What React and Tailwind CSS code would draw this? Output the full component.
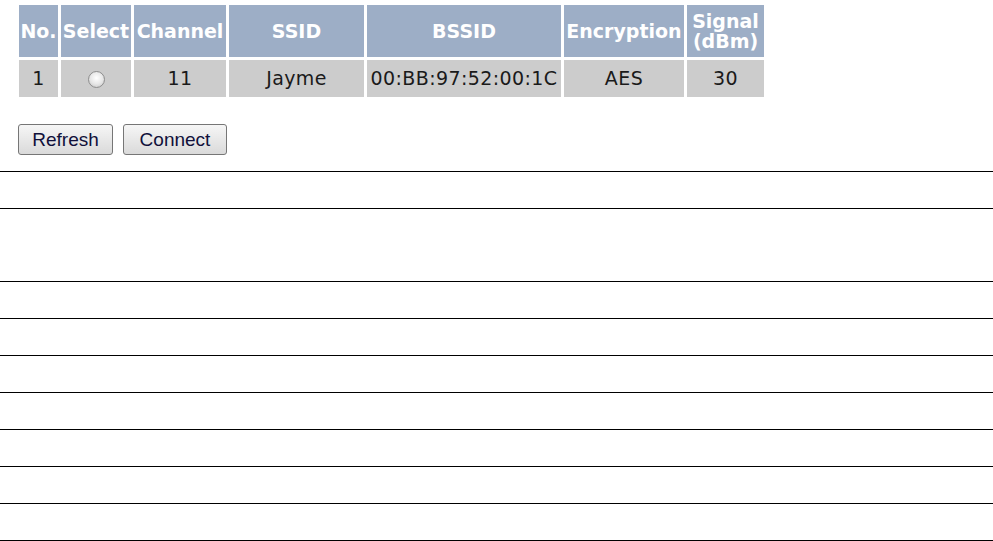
import React from 'react';

const columns = [
  { label: 'No.', width: 'w-[39px]' },
  { label: 'Select', width: 'w-[70px]' },
  { label: 'Channel', width: 'w-[92px]' },
  { label: 'SSID', width: 'w-[135px]' },
  { label: 'BSSID', width: 'w-[194px]' },
  { label: 'Encryption', width: 'w-[120px]' },
  { label: 'Signal (dBm)', width: 'w-[77px]' },
];

const networks = [
  { no: 1, channel: 11, ssid: 'Jayme', bssid: '00:BB:97:52:00:1C', enc: 'AES', signal: 30 },
];

const Radio = () => (
  <span className="inline-block h-[17px] w-[17px] rounded-full border border-[#8e8e8e] bg-[radial-gradient(circle_at_50%_40%,#ffffff_0%,#e8e8e8_50%,#c2c2c2_100%)] align-middle" />
);

const Button = ({ children, width }) => (
  <button
    type="button"
    className={`${width} h-[31px] rounded-[3px] border border-[#767676] bg-gradient-to-b from-[#f6f6f6] to-[#dadada] text-[19px] leading-none text-[#10103a] [font-family:'Liberation_Sans',Arial,sans-serif]`}
  >
    {children}
  </button>
);

const cell = 'bg-[#cccccc] p-0 text-center align-middle text-[19px] tracking-[0.4px] text-[#1a1a1a]';

export default function App() {
  const rowHeights = ['h-[37px]', 'h-[73px]', 'h-[37px]', 'h-[37px]', 'h-[37px]', 'h-[37px]', 'h-[37px]', 'h-[37px]', 'h-[37px]', 'h-px'];

  return (
    <div className="min-h-[541px] w-full bg-white [font-family:'DejaVu_Sans',Verdana,sans-serif]">
      <table className="ml-[16px] mt-[2px] table-fixed border-separate border-spacing-[3px]">
        <thead>
          <tr>
            {columns.map((c) => (
              <th
                key={c.label}
                className={`${c.width} h-[52px] bg-[#9daec6] p-0 text-center align-middle text-[19px] font-bold leading-[20px] text-white`}
              >
                {c.label === 'Signal (dBm)' ? (
                  <span>
                    Signal
                    <br />
                    (dBm)
                  </span>
                ) : (
                  <span className="whitespace-nowrap">{c.label}</span>
                )}
              </th>
            ))}
          </tr>
        </thead>
        <tbody>
          {networks.map((n) => (
            <tr key={n.no}>
              <td className={`h-[37px] ${cell}`}>{n.no}</td>
              <td className="bg-[#cccccc] p-0 text-center align-middle">
                <Radio />
              </td>
              <td className={cell}>{n.channel}</td>
              <td className={cell}>{n.ssid}</td>
              <td className={`whitespace-nowrap ${cell}`}>{n.bssid}</td>
              <td className={cell}>{n.enc}</td>
              <td className={cell}>{n.signal}</td>
            </tr>
          ))}
        </tbody>
      </table>

      <div className="ml-[18px] mt-[24px] flex gap-[10px]">
        <Button width="w-[95px]">Refresh</Button>
        <Button width="w-[104px]">Connect</Button>
      </div>

      <div className="mt-[16px] flex flex-col">
        {rowHeights.map((h, i) => (
          <div key={i} className={`${h} border-t border-black`} />
        ))}
      </div>
    </div>
  );
}
